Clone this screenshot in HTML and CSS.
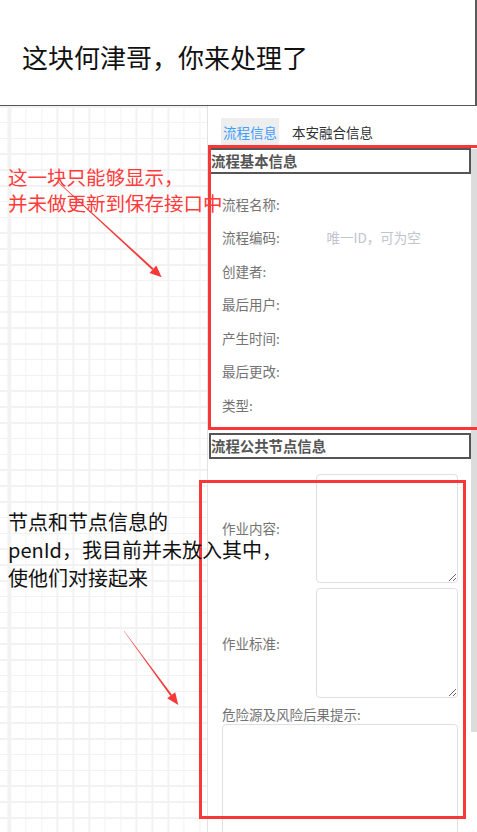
FILE: index.html
```html
<!DOCTYPE html>
<html lang="zh-CN">
<head>
<meta charset="utf-8">
<title>流程信息</title>
<link rel="stylesheet" href="styles.css">
</head>
<body>
<div class="page">
  <header class="topbar">
    <h1 class="title">这块何津哥，你来处理了</h1>
  </header>
  <main class="main">
    <div class="canvas"></div>
    <aside class="panel">
      <div class="panel-body">
        <nav class="tabs">
          <span class="tab active">流程信息</span>
          <span class="tab">本安融合信息</span>
        </nav>
        <div class="section-title">流程基本信息</div>
        <div class="form basic">
          <div class="row"><label class="lbl">流程名称:</label><input class="field" readonly></div>
          <div class="row"><label class="lbl">流程编码:</label><input class="field" readonly placeholder="唯一ID，可为空"></div>
          <div class="row"><label class="lbl">创建者:</label><input class="field" readonly></div>
          <div class="row"><label class="lbl">最后用户:</label><input class="field" readonly></div>
          <div class="row"><label class="lbl">产生时间:</label><input class="field" readonly></div>
          <div class="row"><label class="lbl">最后更改:</label><input class="field" readonly></div>
          <div class="row"><label class="lbl">类型:</label><input class="field" readonly></div>
        </div>
        <div class="section-title">流程公共节点信息</div>
        <div class="form nodes">
          <div class="ta-row"><label class="lbl">作业内容:</label><textarea class="ta"></textarea></div>
          <div class="ta-row second"><label class="lbl">作业标准:</label><textarea class="ta tall"></textarea></div>
          <label class="lbl block-label">危险源及风险后果提示:</label>
          <textarea class="ta wide"></textarea>
        </div>
      </div>
      <div class="scroll-track"><div class="scroll-thumb"></div></div>
    </aside>
  </main>

  <div class="mark mark-1"></div>
  <div class="mark mark-2"></div>
  <p class="note note-red">这一块只能够显示，<br>并未做更新到保存接口中</p>
  <p class="note note-black">节点和节点信息的<br>penId，我目前并未放入其中，<br>使他们对接起来</p>
  <svg class="arrows" width="477" height="832" viewBox="0 0 477 832">
    <polygon points="57.8,182.2 58.2,181.8 153.6,268.4 152.2,270.0" fill="#f53a3a"/>
    <polygon points="161.7,277.3 149.5,272.9 156.3,265.5" fill="#f53a3a"/>
    <polygon points="123.8,631.1 124.2,630.9 172.0,694.7 170.4,695.9" fill="#f53a3a"/>
    <polygon points="178.3,705 167.2,698.3 175.2,692.3" fill="#f53a3a"/>
  </svg>
</div>
</body>
</html>
```

FILE: styles.css
```css
* {
  box-sizing: border-box;
}

html,
body {
  margin: 0;
  padding: 0;
  background: #fff;
}

body {
  font-family: "Noto Sans CJK SC", "Noto Sans", sans-serif;
}

.page {
  position: relative;
  width: 477px;
  height: 832px;
  overflow: hidden;
}

/* top bar */
.topbar {
  height: 106px;
  border-right: 2px solid #5a5a5a;
  border-bottom: 1px solid #555;
  padding: 40px 0 0 22px;
}

.title {
  margin: 0;
  font-size: 26px;
  font-weight: 400;
  line-height: 33px;
  color: #111;
}

/* main */
.main {
  display: flex;
  height: 726px;
}

.canvas {
  width: 207px;
  flex: none;
  background-color: #fff;
  background-image:
    repeating-linear-gradient(to right, #f2f2f2 0, #f2f2f2 1.6px, transparent 1.6px, transparent 15.8px),
    repeating-linear-gradient(to bottom, #f2f2f2 0, #f2f2f2 1.6px, transparent 1.6px, transparent 15.8px);
  background-position: 9.4px 0;
}

.panel {
  flex: 1;
  display: flex;
  border-left: 1px solid #e2e2e2;
  overflow: hidden;
  background: #fff;
}

.panel-body {
  flex: 1;
  min-width: 0;
}

.scroll-track {
  width: 6px;
  flex: none;
}

.scroll-thumb {
  margin-top: 43px;
  height: 583px;
  background: #dcdcdc;
}

/* tabs */
.tabs {
  display: flex;
  gap: 11px;
  padding: 12px 0 0 13px;
}

.tab {
  height: 30px;
  padding: 0 2px;
  font-size: 13.5px;
  line-height: 28px;
  color: #303133;
  border-bottom: 2px solid transparent;
}

.tab.active {
  background: #eeeeee;
  color: #409eff;
  border-bottom-color: #409eff;
}

/* section headers */
.section-title {
  margin-left: 1px;
  height: 26px;
  border: 2px solid #555;
  font-size: 14.4px;
  font-weight: 700;
  line-height: 22px;
  color: #555;
  white-space: nowrap;
}

/* forms */
.form {
  padding-left: 14px;
  padding-right: 13px;
}

.form.basic {
  padding-top: 13px;
  padding-bottom: 11px;
}

.row {
  display: flex;
  align-items: center;
  height: 33.5px;
}

.lbl {
  flex: none;
  width: 94px;
  font-size: 13.5px;
  line-height: 20px;
  color: #737373;
  white-space: nowrap;
}

.field {
  flex: 1;
  min-width: 0;
  height: 24px;
  border: none;
  outline: none;
  padding: 0 0 0 10.5px;
  background: transparent;
  font-family: inherit;
  font-size: 13.5px;
  color: #606266;
}

.field::placeholder {
  color: #c0c4cc;
}

.form.nodes {
  padding-top: 15px;
}

.ta-row {
  display: flex;
  align-items: center;
}

.ta-row.second {
  margin-top: 5px;
}

.ta {
  display: block;
  flex: 1;
  min-width: 0;
  height: 109px;
  margin: 0;
  border: 1px solid #dcdfe6;
  border-radius: 4px;
  background: #fff;
  resize: vertical;
  font-family: inherit;
  font-size: 13.5px;
}

.ta.tall {
  height: 110px;
}

.block-label {
  display: block;
  width: auto;
  margin-top: 6px;
}

.ta.wide {
  width: 100%;
  height: 130px;
}

/* annotation layer */
.mark {
  position: absolute;
  border: 3px solid #f63838;
}

.mark-1 {
  left: 208px;
  top: 145px;
  width: 275px;
  height: 285px;
}

.mark-2 {
  left: 199px;
  top: 480px;
  width: 267px;
  height: 339px;
}

.note {
  position: absolute;
  left: 8px;
  margin: 0;
  white-space: nowrap;
}

.note-red {
  top: 164px;
  font-size: 19.5px;
  line-height: 25.5px;
  color: #ff3b3b;
}

.note-black {
  top: 508px;
  font-size: 20px;
  line-height: 28px;
  color: #111;
}

.arrows {
  position: absolute;
  left: 0;
  top: 0;
  pointer-events: none;
}
```
